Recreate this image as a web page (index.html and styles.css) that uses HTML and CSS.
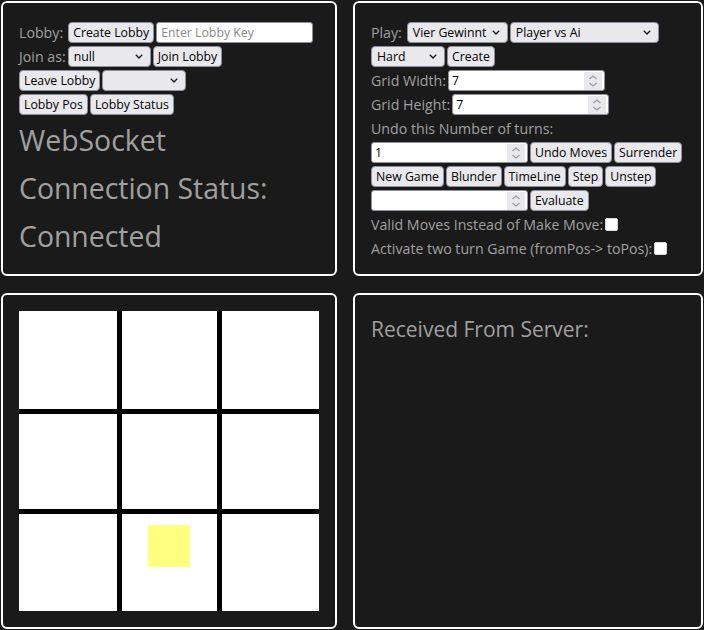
FILE: index.html
```html
<!DOCTYPE html>
<html lang="en">
<head>
<meta charset="utf-8">
<title>Game Client</title>
<link rel="stylesheet" href="styles.css">
</head>
<body>
<div class="page">
  <section class="panel lobby">
    <div class="row">
      <span class="label sp">Lobby:</span>
      <button class="btn">Create Lobby</button>
      <input class="text" type="text" placeholder="Enter Lobby Key">
    </div>
    <div class="row">
      <span class="label">Join as:</span>
      <div class="select w83"><span>null</span><svg class="chev" width="8" height="5" viewBox="0 0 8 5"><path d="M0.8 0.8 L4 4 L7.2 0.8"/></svg></div>
      <button class="btn">Join Lobby</button>
    </div>
    <div class="row">
      <button class="btn">Leave Lobby</button>
      <div class="select w84"><span></span><svg class="chev" width="8" height="5" viewBox="0 0 8 5"><path d="M0.8 0.8 L4 4 L7.2 0.8"/></svg></div>
    </div>
    <div class="row">
      <button class="btn">Lobby Pos</button>
      <button class="btn">Lobby Status</button>
    </div>
    <h1 class="status">WebSocket Connection Status: Connected</h1>
  </section>

  <section class="panel controls">
    <div class="row">
      <span class="label sp">Play:</span>
      <div class="select w101"><span>Vier Gewinnt</span><svg class="chev" width="8" height="5" viewBox="0 0 8 5"><path d="M0.8 0.8 L4 4 L7.2 0.8"/></svg></div>
      <div class="select w149"><span>Player vs Ai</span><svg class="chev" width="8" height="5" viewBox="0 0 8 5"><path d="M0.8 0.8 L4 4 L7.2 0.8"/></svg></div>
    </div>
    <div class="row">
      <div class="select w74"><span>Hard</span><svg class="chev" width="8" height="5" viewBox="0 0 8 5"><path d="M0.8 0.8 L4 4 L7.2 0.8"/></svg></div>
      <button class="btn">Create</button>
    </div>
    <div class="row">
      <span class="label">Grid Width:</span>
      <div class="num"><input type="text" value="7"><svg class="spin" width="18" height="18" viewBox="0 0 18 18"><path d="M5.5 7 L9 4 L12.5 7 M5.5 11 L9 14 L12.5 11"/></svg></div>
    </div>
    <div class="row">
      <span class="label">Grid Height:</span>
      <div class="num"><input type="text" value="7"><svg class="spin" width="18" height="18" viewBox="0 0 18 18"><path d="M5.5 7 L9 4 L12.5 7 M5.5 11 L9 14 L12.5 11"/></svg></div>
    </div>
    <div class="row">
      <span class="label">Undo this Number of turns:</span>
    </div>
    <div class="row">
      <div class="num"><input type="text" value="1"><svg class="spin" width="18" height="18" viewBox="0 0 18 18"><path d="M5.5 7 L9 4 L12.5 7 M5.5 11 L9 14 L12.5 11"/></svg></div>
      <button class="btn">Undo Moves</button>
      <button class="btn">Surrender</button>
    </div>
    <div class="row">
      <button class="btn">New Game</button>
      <button class="btn">Blunder</button>
      <button class="btn">TimeLine</button>
      <button class="btn">Step</button>
      <button class="btn">Unstep</button>
    </div>
    <div class="row">
      <div class="num"><input type="text" value=""><svg class="spin" width="18" height="18" viewBox="0 0 18 18"><path d="M5.5 7 L9 4 L12.5 7 M5.5 11 L9 14 L12.5 11"/></svg></div>
      <button class="btn">Evaluate</button>
    </div>
    <div class="row">
      <span class="label">Valid Moves Instead of Make Move:</span>
      <input class="check" type="checkbox">
    </div>
    <div class="row">
      <span class="label">Activate two turn Game (fromPos-&gt; toPos):</span>
      <input class="check" type="checkbox">
    </div>
  </section>

  <section class="panel game">
    <div class="board">
      <div class="cell"></div><div class="cell"></div><div class="cell"></div>
      <div class="cell"></div><div class="cell"></div><div class="cell"></div>
      <div class="cell"></div><div class="cell"><div class="piece"></div></div><div class="cell"></div>
    </div>
  </section>

  <section class="panel server">
    <h2 class="received">Received From Server:</h2>
  </section>
</div>
</body>
</html>
```

FILE: styles.css
```css
* { box-sizing: border-box; }

html, body {
  margin: 0;
  background: #1a1a1a;
}

body {
  font-family: "Open Sans", "Noto Sans", sans-serif;
  color: #a0a0a0;
}

.page {
  display: grid;
  grid-template-columns: 336px 350px;
  grid-template-rows: 275px 336px;
  column-gap: 16px;
  row-gap: 17px;
  padding: 1px;
}

.panel {
  border: 2px solid #ffffff;
  border-radius: 6px;
  padding: 19px 16px 16px;
  display: flex;
  flex-direction: column;
  gap: 3px;
}

.game, .server { padding-top: 16px; }

.row {
  display: flex;
  align-items: center;
  gap: 2px;
  height: 21px;
}

.label {
  font-size: 14.2px;
  line-height: 21px;
  white-space: nowrap;
}

.label.sp { margin-right: 3px; }

.btn {
  font-family: "Open Sans", sans-serif;
  font-size: 12.3px;
  height: 21px;
  padding: 0 4px;
  margin: 0;
  color: #000;
  background: #e9e9ed;
  border: 1px solid #8f8f9d;
  border-radius: 4px;
  line-height: 19px;
  white-space: nowrap;
}

.text {
  width: 157px;
  height: 21px;
  margin: 0;
  padding: 0 4px;
  font-family: "Open Sans", sans-serif;
  font-size: 12.3px;
  color: #000;
  background: #fff;
  border: 1px solid #8f8f9d;
  border-radius: 3px;
  outline: none;
}

.text::placeholder { color: #8a8a8a; }

.select {
  height: 21px;
  display: flex;
  align-items: center;
  padding: 0 7px 0 5px;
  font-size: 12.3px;
  color: #000;
  background: #e9e9ed;
  border: 1px solid #8f8f9d;
  border-radius: 4px;
  white-space: nowrap;
}

.select .chev {
  margin-left: auto;
  flex: none;
  fill: none;
  stroke: #1c1b22;
  stroke-width: 1.4;
}

.w74 { width: 74px; }
.w83 { width: 83px; }
.w84 { width: 84px; }
.w101 { width: 101px; }
.w149 { width: 149px; }

.num {
  width: 157px;
  height: 21px;
  display: flex;
  align-items: center;
  padding: 0 2px 0 3px;
  background: #fff;
  border: 1px solid #8f8f9d;
  border-radius: 3px;
}

.num input {
  flex: 1;
  min-width: 0;
  border: 0;
  padding: 0;
  margin: 0;
  outline: none;
  background: transparent;
  font-family: "Open Sans", sans-serif;
  font-size: 12.3px;
  color: #000;
}

.spin {
  flex: none;
  background: #e9e9ed;
  fill: none;
  stroke: #9a9aa4;
  stroke-width: 1.2;
}

.check {
  appearance: none;
  -webkit-appearance: none;
  width: 13px;
  height: 13px;
  margin: 0;
  background: #fff;
  border: 1px solid #d8d8de;
  border-radius: 2px;
}

.status {
  margin: -2px 0 0;
  font-size: 28.4px;
  font-weight: 400;
  line-height: 48px;
}

.received {
  margin: 0;
  font-size: 21px;
  font-weight: 400;
  line-height: 36px;
}

.board {
  width: 300px;
  height: 300px;
  display: grid;
  grid-template-columns: 98px 95px 97px;
  grid-template-rows: 98px 95px 97px;
  gap: 5px;
  background: #000;
}

.cell {
  background: #fff;
  position: relative;
}

.piece {
  position: absolute;
  left: 26px;
  top: 11px;
  width: 42px;
  height: 42px;
  background: #ffff80;
}
```
